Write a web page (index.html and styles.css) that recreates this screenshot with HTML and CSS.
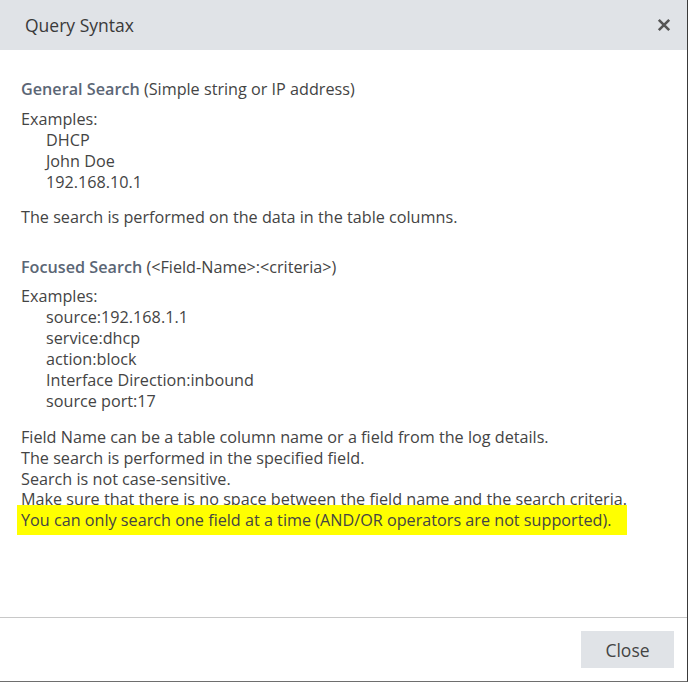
FILE: index.html
```html
<!DOCTYPE html>
<html>
<head>
<meta charset="utf-8">
<link rel="stylesheet" href="styles.css">
</head>
<body>
<div class="dialog">
  <div class="header">
    <span class="title">Query Syntax</span>
    <span class="close-x" aria-label="Close">
      <svg width="14" height="14" viewBox="0 0 14 14"><path d="M1.8 1.8 L12.2 12.2 M12.2 1.8 L1.8 12.2" stroke="#555" stroke-width="2.6" stroke-linecap="butt"/></svg>
    </span>
  </div>
  <div class="content">
    <p class="heading"><span class="strong">General Search</span> (Simple string or IP address)</p>
    <div class="examples">
      <div>Examples:</div>
      <div class="ex">DHCP</div>
      <div class="ex">John Doe</div>
      <div class="ex">192.168.10.1</div>
    </div>
    <p class="note">The search is performed on the data in the table columns.</p>
    <p class="heading heading2"><span class="strong">Focused Search</span> (&lt;Field-Name&gt;:&lt;criteria&gt;)</p>
    <div class="examples">
      <div>Examples:</div>
      <div class="ex">source:192.168.1.1</div>
      <div class="ex">service:dhcp</div>
      <div class="ex">action:block</div>
      <div class="ex">Interface Direction:inbound</div>
      <div class="ex">source port:17</div>
    </div>
    <div class="rules">
      <div>Field Name can be a table column name or a field from the log details.</div>
      <div>The search is performed in the specified field.</div>
      <div>Search is not case-sensitive.</div>
      <div>Make sure that there is no space between the field name and the search criteria.</div>
      <div><span class="highlight">You can only search one field at a time (AND/OR operators are not supported).</span></div>
    </div>
  </div>
  <div class="footer">
    <button class="btn">Close</button>
  </div>
</div>
</body>
</html>
```
FILE: styles.css
```css
html, body {
  margin: 0;
  padding: 0;
  background: #ffffff;
}
.dialog {
  width: 688px;
  height: 682px;
  box-sizing: border-box;
  border-right: 1px solid #3a3a3a;
  border-bottom: 1px solid #6e6e6e;
  display: flex;
  flex-direction: column;
  font-family: "Open Sans", "Liberation Sans", sans-serif;
  color: #444;
}
.header {
  height: 50px;
  flex: none;
  background: #e0e3e7;
  display: flex;
  align-items: center;
  justify-content: space-between;
  padding: 0 16px 0 25px;
}
.title {
  font-size: 17.5px;
  color: #3a3a3a;
}
.close-x {
  display: flex;
  width: 14px;
  height: 14px;
}
.content {
  flex: 1;
  padding: 9px 0 0 21px;
  font-size: 16.2px;
  line-height: 21px;
}
p {
  margin: 0;
}
.heading {
  margin-top: 20px;
  margin-bottom: 9px;
}
.heading2 {
  margin-top: 29px;
  margin-bottom: 8px;
}
.strong {
  font-weight: 600;
  color: #5b6675;
}
.examples .ex {
  padding-left: 25px;
}
.note {
  margin-top: 14px;
}
.rules {
  margin-top: 15px;
  line-height: 20.75px;
}
.highlight {
  background: #ffff00;
  margin-left: -4px;
  padding: 4px 16px 4px 4px;
}
.footer {
  flex: none;
  height: 63px;
  border-top: 1px solid #c8c8c8;
  display: flex;
  justify-content: flex-end;
  align-items: center;
  padding-right: 13px;
}
.btn {
  width: 93px;
  height: 37px;
  border: none;
  background: #e0e3e7;
  font-family: "Open Sans", "Liberation Sans", sans-serif;
  font-size: 17.5px;
  color: #444;
  padding: 0;
}
```
